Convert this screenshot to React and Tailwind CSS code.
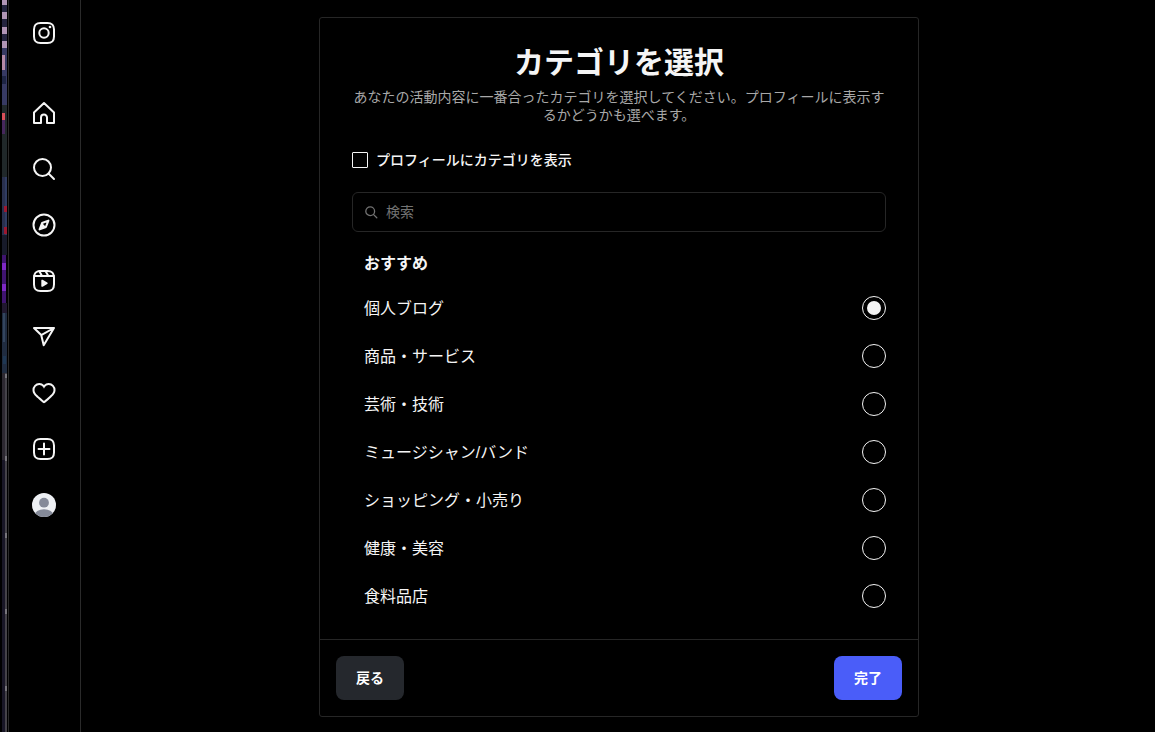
import { useState } from "react";

const categories = [
	"個人ブログ",
	"商品・サービス",
	"芸術・技術",
	"ミュージシャン/バンド",
	"ショッピング・小売り",
	"健康・美容",
	"食料品店",
];

const ROUNDED_BOX =
	"M2 12v3.45c0 2.85.7 4.005 1.606 4.944.94.909 2.098 1.608 4.946 1.608h6.896c2.848 0 4.006-.7 4.946-1.608C21.302 19.455 22 18.3 22 15.45V8.552c0-2.849-.698-4.006-1.606-4.945C19.454 2.7 18.296 2 15.448 2H8.552c-2.848 0-4.006.699-4.946 1.607C2.698 4.547 2 5.703 2 8.552Z";

// Every sidebar icon is drawn on the same 24px grid
function Icon({ children }) {
	return (
		<svg
			className="w-6 h-6"
			viewBox="0 0 24 24"
			fill="none"
			stroke="currentColor"
			strokeWidth={2}
			strokeLinecap="round"
			strokeLinejoin="round"
			aria-hidden="true"
		>
			{children}
		</svg>
	);
}

const navItems = [
	{
		label: "ホーム",
		icon: (
			<path d="M9.005 16.545a2.997 2.997 0 0 1 2.997-2.997A2.997 2.997 0 0 1 15 16.545V22h7V11.543L12 2 2 11.543V22h7.005Z" />
		),
	},
	{
		label: "検索",
		icon: (
			<>
				<circle cx="10.5" cy="10.5" r="8.5" />
				<path d="M16.511 16.511 22 22" />
			</>
		),
	},
	{
		label: "発見",
		icon: (
			<>
				<path d="m13.941 13.953-6.36 2.471 2.479-6.368 6.36-2.471Z" />
				<path
					d="m10.06 10.056 3.889 3.889-6.368 2.479Z"
					fill="currentColor"
					stroke="none"
				/>
				<circle cx="12" cy="12" r="10.5" />
			</>
		),
	},
	{
		label: "リール動画",
		icon: (
			<>
				<path d="M2.049 7.002h19.901M13.504 2.001l2.858 5.001M7.207 2.11l2.795 4.892" />
				<path d={ROUNDED_BOX} />
				<path
					d="M9.763 17.664a.908.908 0 0 1-.454-.787V11.63a.909.909 0 0 1 1.364-.788l4.545 2.624a.909.909 0 0 1 0 1.575l-4.545 2.624a.91.91 0 0 1-.91 0Z"
					fill="currentColor"
					stroke="none"
				/>
			</>
		),
	},
	{
		label: "メッセージ",
		icon: (
			<path d="M22 3 9.218 10.083M11.698 20.334 22 3.001H2l7.218 7.083Z" />
		),
	},
	{
		label: "お知らせ",
		icon: (
			<path
				d="M16.792 3.904A4.989 4.989 0 0 1 21.5 9.122c0 3.072-2.652 4.959-5.197 7.222-2.512 2.243-3.865 3.469-4.303 3.752-.477-.309-2.143-1.823-4.303-3.752C5.141 14.072 2.5 12.167 2.5 9.122a4.989 4.989 0 0 1 4.708-5.218 4.21 4.21 0 0 1 3.675 1.941c.84 1.175.98 1.763 1.12 1.763s.278-.588 1.11-1.766a4.17 4.17 0 0 1 3.679-1.938m0-2a6.04 6.04 0 0 0-4.797 2.127 6.052 6.052 0 0 0-4.787-2.127A6.985 6.985 0 0 0 .5 9.122c0 3.61 2.55 5.827 5.015 7.97.283.246.569.494.853.747l1.027.918a44.998 44.998 0 0 0 3.518 3.018 2 2 0 0 0 2.174 0 45.263 45.263 0 0 0 3.626-3.115l.922-.824c.293-.26.59-.519.885-.774 2.334-2.025 4.98-4.32 4.98-7.94a6.985 6.985 0 0 0-6.708-7.218Z"
				fill="currentColor"
				stroke="none"
			/>
		),
	},
	{
		label: "作成",
		icon: (
			<>
				<path d={ROUNDED_BOX} />
				<path d="M6.545 12.001h10.91M12.003 6.545v10.91" />
			</>
		),
	},
];

// Sliver of the window behind the browser: [y, height, color, x, width]
const backdrop = [
	[0, 48, "#24243e", 2, 5],
	[48, 57, "#373a63", 2, 5],
	[76, 8, "#1e2544", 2, 4],
	[0, 5, "#b095b5", 2, 5],
	[12, 7, "#b095b5", 2, 5],
	[27, 7, "#b095b5", 2, 5],
	[41, 7, "#b095b5", 2, 5],
	[55, 15, "#b58aa8", 2, 3],
	[105, 72, "#20282a", 2, 5],
	[113, 7, "#d84f5a", 2, 3],
	[120, 14, "#45275c", 2, 3],
	[177, 58, "#29304e", 2, 5],
	[177, 58, "#303c62", 5, 2],
	[206, 6, "#9c1830", 4, 3],
	[227, 7, "#9c1830", 4, 3],
	[235, 20, "#171a2a", 2, 5],
	[255, 48, "#3f1470", 2, 4],
	[263, 7, "#7d28c4", 2, 4],
	[284, 7, "#7d28c4", 2, 4],
	[303, 10, "#20182e", 2, 5],
	[313, 60, "#202c40", 2, 5],
	[313, 29, "#33455e", 3, 2],
	[356, 8, "#1f3854", 3, 3],
	[373, 87, "#2c2830", 2, 5],
	[460, 272, "#181626", 2, 3],
	[373, 359, "#454349", 5, 2],
	[374, 4, "#77757b", 5, 2],
	[456, 5, "#77757b", 5, 2],
	[533, 5, "#77757b", 5, 2],
	[609, 5, "#77757b", 5, 2],
	[686, 5, "#77757b", 5, 2],
];

function Backdrop() {
	return (
		<svg
			className="w-2 h-screen flex-shrink-0"
			viewBox="0 0 8 732"
			preserveAspectRatio="none"
			aria-hidden="true"
		>
			{backdrop.map(([y, height, fill, x, width], i) => (
				<rect key={i} x={x} y={y} width={width} height={height} fill={fill} />
			))}
		</svg>
	);
}

function Sidebar() {
	return (
		<nav className="flex flex-col flex-shrink-0 gap-8 w-[73px] min-h-screen pt-[21px] pl-[23px] border-x border-[#2a2a2a]">
			<a href="#" aria-label="Instagram" className="mb-6 w-6 h-6">
				<Icon>
					<path d={ROUNDED_BOX} />
					<circle cx="12" cy="12" r="4.7" />
					<circle cx="18" cy="6" r="1.3" fill="currentColor" stroke="none" />
				</Icon>
			</a>
			{navItems.map((item) => (
				<a key={item.label} href="#" aria-label={item.label} className="w-6 h-6">
					<Icon>{item.icon}</Icon>
				</a>
			))}
			<a
				href="#"
				aria-label="プロフィール"
				className="w-6 h-6 rounded-full overflow-hidden"
			>
				<svg className="w-6 h-6" viewBox="0 0 24 24" aria-hidden="true">
					<rect width="24" height="24" fill="#eef0f4" />
					<circle cx="12" cy="9.7" r="4.9" fill="#858a99" />
					<ellipse cx="12" cy="22.5" rx="9.5" ry="6.2" fill="#858a99" />
				</svg>
			</a>
		</nav>
	);
}

export default function App() {
	const [selected, setSelected] = useState(categories[0]);
	const [showCategory, setShowCategory] = useState(false);
	const [query, setQuery] = useState("");

	return (
		<div
			lang="ja"
			className="flex min-h-screen bg-black text-[#f5f5f5] font-['Liberation_Sans','Noto_Sans_CJK_JP',sans-serif]"
		>
			<Backdrop />
			<Sidebar />
			<main className="flex flex-1 justify-center items-start min-w-0 pl-0.5 pt-[17px] pb-[15px]">
				<form
					className="w-full max-w-[600px] border border-[#262626] rounded-[3px]"
					onSubmit={(e) => e.preventDefault()}
				>
					<div className="px-8 pt-6 pb-[19px]">
						<h1 className="text-center text-[30px] leading-[42px] font-bold">
							カテゴリを選択
						</h1>
						<p className="mt-1 text-center text-sm leading-[18px] text-[#a8a8a8]">
							あなたの活動内容に一番合ったカテゴリを選択してください。プロフィールに表示するかどうかも選べます。
						</p>
						<label className="flex items-center gap-2 mt-6 h-6 text-sm font-medium">
							<input
								type="checkbox"
								checked={showCategory}
								onChange={(e) => setShowCategory(e.target.checked)}
								className="appearance-none w-4 h-4 p-0.5 border border-[#f5f5f5] rounded-[1px] bg-clip-content checked:bg-[#f5f5f5]"
							/>
							プロフィールにカテゴリを表示
						</label>
						<label className="flex items-center gap-2 mt-5 h-10 px-3 border border-[#262626] rounded-md text-[#737373]">
							<svg
								className="w-[13px] h-[13px]"
								viewBox="0 0 13 13"
								fill="none"
								stroke="currentColor"
								strokeWidth="1.3"
								strokeLinecap="round"
								aria-hidden="true"
							>
								<circle cx="5.2" cy="5.2" r="4.4" />
								<path d="m8.6 8.6 3.2 3.2" />
							</svg>
							<input
								type="text"
								aria-label="検索"
								placeholder="検索"
								value={query}
								onChange={(e) => setQuery(e.target.value)}
								className="flex-1 min-w-0 bg-transparent text-sm text-[#f5f5f5] placeholder:text-[#737373] outline-none"
							/>
						</label>
						<fieldset className="mt-4">
							<legend className="mb-1 pl-3 text-base leading-8 font-bold">
								おすすめ
							</legend>
							{categories.map((name) => (
								<label
									key={name}
									className="flex items-center justify-between h-12 pl-3 text-base"
								>
									<span className="pt-0.5">{name}</span>
									<input
										type="radio"
										name="category"
										checked={selected === name}
										onChange={() => setSelected(name)}
										className="appearance-none w-6 h-6 p-1 border border-[#f5f5f5] rounded-full bg-clip-content checked:bg-[#f5f5f5]"
									/>
								</label>
							))}
						</fieldset>
					</div>
					<div className="flex justify-between p-4 border-t border-[#262626] text-sm font-bold">
						<button
							type="button"
							className="h-11 px-5 rounded-lg bg-[#25282d] text-white"
						>
							戻る
						</button>
						<button
							type="submit"
							className="h-11 px-5 rounded-lg bg-[#4a5df9] text-white"
						>
							完了
						</button>
					</div>
				</form>
			</main>
		</div>
	);
}
